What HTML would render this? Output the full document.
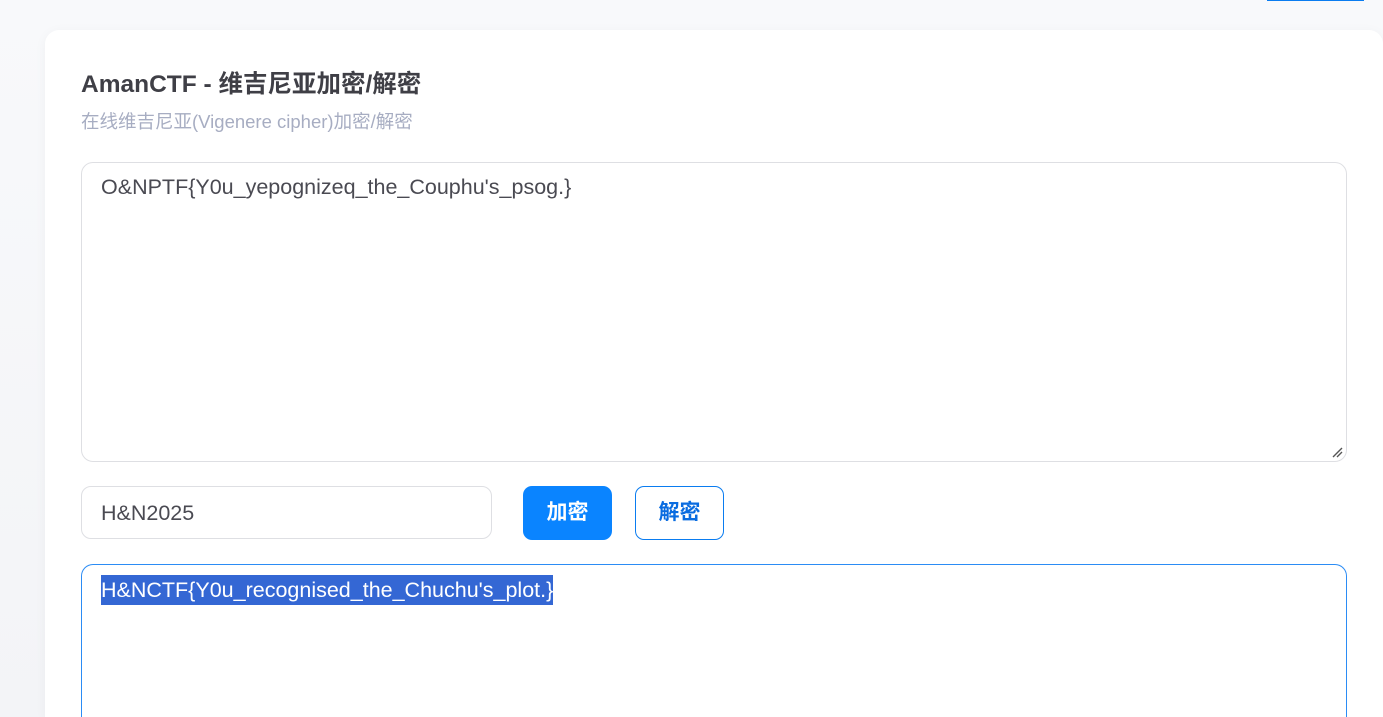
<!DOCTYPE html>
<html><head><meta charset="utf-8"><style>
html,body{margin:0;width:1383px;height:717px;overflow:hidden}
body{background:linear-gradient(#f8f9fb,#f3f4f7);font-family:"Liberation Sans","Noto Sans CJK SC",sans-serif;position:relative}
.bar{position:absolute;left:1267px;top:0;width:97px;height:1px;background:#0a7cf0}
.card{position:absolute;left:45px;top:30px;width:1338px;height:687px;background:#fff;border-radius:14px 14px 0 0;box-shadow:0 2px 12px rgba(0,0,0,.04)}
h1{position:absolute;left:81px;top:65px;margin:0;font-size:24.5px;font-weight:bold;color:#3f3f46;white-space:nowrap}
.sub{position:absolute;left:81px;top:108px;font-size:18.5px;color:#a7adc2;white-space:nowrap}
.ta{position:absolute;left:81px;width:1266px;box-sizing:border-box;border:1px solid #dedfe3;border-radius:12px;font-size:21.5px;color:#4a4a52;padding:12px 19px;white-space:nowrap}
.inp{position:absolute;left:81px;top:486px;width:411px;height:53px;box-sizing:border-box;border:1px solid #dedfe3;border-radius:10px;font-size:21.5px;color:#4a4a52;padding:14px 19px}
.b1{position:absolute;left:523px;top:486px;width:89px;height:54px;background:#0a84ff;border-radius:9px;color:#fff;font-weight:bold;font-size:21px;text-align:center;line-height:54px}
.b2{position:absolute;left:635px;top:486px;width:89px;height:54px;box-sizing:border-box;border:1px solid #0a7cf0;border-radius:9px;color:#0a6ce0;font-weight:bold;font-size:21px;text-align:center;line-height:52px}
.sel{background:#3467d4;color:#fff;padding:3px 0}
</style></head><body>
<div class="bar"></div>
<div class="card"></div>
<h1>AmanCTF - 维吉尼亚加密/解密</h1>
<div class="sub">在线维吉尼亚(Vigenere cipher)加密/解密</div>
<div class="ta" style="top:162px;height:300px">O&amp;NPTF{Y0u_yepognizeq_the_Couphu's_psog.}
<svg style="position:absolute;right:3px;bottom:3px" width="11" height="11"><path d="M1 10L10 1M5 10L10 5" stroke="#555" stroke-width="1.4"/></svg></div>
<div class="inp">H&amp;N2025</div>
<div class="b1">加密</div>
<div class="b2">解密</div>
<div class="ta" style="top:564px;height:153px;border-color:#2b8cf5;border-bottom:none;border-radius:12px 12px 0 0;padding-top:13px"><span class="sel">H&amp;NCTF{Y0u_recognised_the_Chuchu's_plot.}</span></div>
</body></html>
